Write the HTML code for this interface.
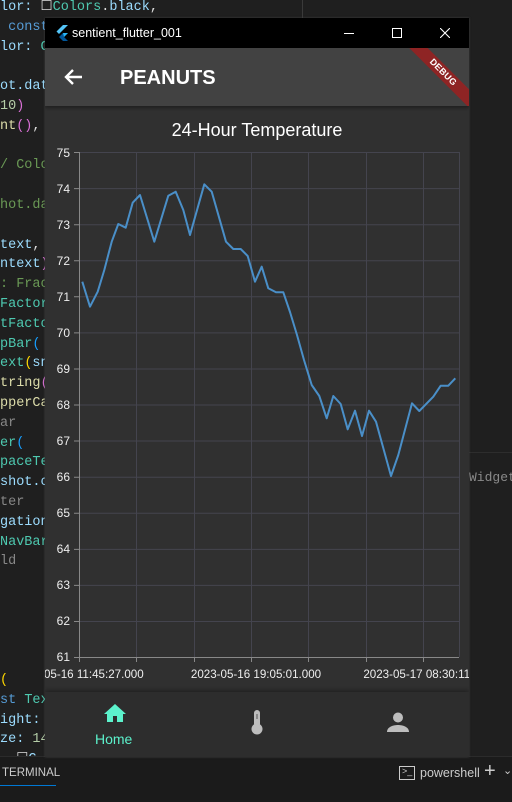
<!DOCTYPE html>
<html><head><meta charset="utf-8"><style>
*{margin:0;padding:0;box-sizing:border-box}
body{width:512px;height:802px;overflow:hidden;background:#1f1f1f;position:relative;font-family:"Liberation Sans",sans-serif}
.code{position:absolute;left:0;top:-2px;font-family:"Liberation Mono",monospace;font-size:13.5px;line-height:19.8px;color:#9cdcfe;white-space:pre}
.abs{position:absolute}
</style></head><body>
<div class="code"><span style="color:#9cdcfe">lor: </span><span style="color:#ddd">☐</span><span style="color:#4ec9b0">Colors</span><span style="color:#ddd">.</span><span style="color:#9cdcfe">black</span><span style="color:#ddd">,</span>
<span style="color:#569cd6"> const</span>
lor: <span style="color:#4ec9b0">C</span>

ot.dat
<span style="color:#b5cea8">10</span><span style="color:#da70d6">)</span>
<span style="color:#dcdcaa">nt</span><span style="color:#da70d6">()</span><span style="color:#ddd">,</span>

<span style="color:#6a9955">/ Colo</span>

<span style="color:#6a9955">hot.da</span>

text<span style="color:#ddd">,</span>
ntext<span style="color:#da70d6">)</span>
<span style="color:#6a9955">: Frac</span>
<span style="color:#4ec9b0">Factor</span>
<span style="color:#4ec9b0">tFacto</span>
<span style="color:#4ec9b0">pBar</span><span style="color:#179fff">(</span>
<span style="color:#4ec9b0">ext</span><span style="color:#ffd700">(</span>sn
<span style="color:#dcdcaa">tring</span><span style="color:#da70d6">(</span>
<span style="color:#dcdcaa">pperCa</span>
<span style="color:#888">ar</span>
<span style="color:#4ec9b0">er</span><span style="color:#179fff">(</span>
<span style="color:#4ec9b0">paceTe</span>
shot.c
<span style="color:#888">ter</span>
gation
<span style="color:#4ec9b0">NavBar</span>
<span style="color:#888">ld</span>





<span style="color:#ffd700">(</span>
<span style="color:#569cd6">st </span><span style="color:#4ec9b0">Tex</span>
ight:
ze: <span style="color:#b5cea8">14</span>
  <span style="color:#ddd">☐</span>C.</div>
<div class="abs" style="left:302px;top:0;width:1px;height:18px;background:#3a3a3a"></div>
<div class="abs" style="left:469px;top:452px;width:43px;height:1px;background:#2d2d2d"></div>
<div class="abs" style="left:469px;top:470px;font-family:'Liberation Mono',monospace;font-size:13px;color:#8a8a8a">Widget</div>

<!-- bottom panel -->
<div class="abs" style="left:0;top:756px;width:512px;height:46px;background:#1b1b1b;border-top:1px solid #2b2b2b"></div>
<div class="abs" style="left:2px;top:767px;font-size:11.5px;color:#ccc">TERMINAL</div>
<div class="abs" style="left:0;top:785px;width:56px;height:1px;background:#0078d4"></div>
<div class="abs" style="left:399px;top:766px;width:16px;height:14px;border:1px solid #ccc"></div>
<div class="abs" style="left:402px;top:766px;font-size:9px;color:#ccc">&gt;_</div>
<div class="abs" style="left:420px;top:766px;font-size:12.5px;color:#ccc">powershell</div>
<div class="abs" style="left:484px;top:760px;font-size:20px;color:#ccc">+</div>
<div class="abs" style="left:503px;top:764px;font-size:11px;color:#ccc">⌄</div>

<!-- window -->
<div class="abs" style="left:45px;top:18px;width:424px;height:739px;background:#303030;box-shadow:0 0 2px #444;overflow:hidden">
  <div class="abs" style="left:0;top:0;width:424px;height:30px;background:#000"></div>
  <svg class="abs" style="left:10px;top:7px" width="14" height="17" viewBox="0 0 14 17"><path d="M8 0h5L4 9 1.5 6.5z" fill="#54c5f8"/><path d="M8 8h5l-4 4 4 4H8L4 12z" fill="#01579b"/><path d="M8 8h5l-4 4z" fill="#29b6f6"/></svg>
  <div class="abs" style="left:27px;top:8px;font-size:12.5px;color:#fff">sentient_flutter_001</div>
  <div class="abs" style="left:299px;top:15px;width:10px;height:1px;background:#fff"></div>
  <div class="abs" style="left:347px;top:10px;width:10px;height:10px;border:1px solid #fff"></div>
  <svg class="abs" style="left:395px;top:10px" width="10" height="10" viewBox="0 0 10 10"><path d="M0 0L10 10M10 0L0 10" stroke="#fff" stroke-width="1.1"/></svg>
  <div class="abs" style="left:0;top:30px;width:424px;height:58px;background:#424242;box-shadow:0 2px 3px rgba(0,0,0,.35);overflow:hidden">
    <div class="abs" style="left:348px;top:18px;width:100px;height:13px;background:#8e2424;transform:rotate(45deg);color:#fff;font-size:9px;font-weight:bold;text-align:center;line-height:13px;letter-spacing:.3px">DEBUG</div>
  </div>
  <svg class="abs" style="left:19px;top:50px" width="20" height="18" viewBox="0 0 20 18"><path d="M18 9H3M9 2L2 9l7 7" stroke="#fff" stroke-width="2.4" fill="none"/></svg>
  <div class="abs" style="left:75px;top:49px;font-size:20px;font-weight:bold;color:#fff">PEANUTS</div>
  <div class="abs" style="left:0;top:102px;width:424px;text-align:center;font-size:18px;color:#fff">24-Hour Temperature</div>
  <!-- nav -->
  <div class="abs" style="left:0;top:674px;width:424px;height:65px;background:#2d2d2d;box-shadow:0 -2px 4px rgba(0,0,0,.3)"></div>
  <svg class="abs" style="left:58px;top:685px" width="24" height="20" viewBox="0 0 24 20"><path d="M12 1L1 11h3v8h6v-6h4v6h6v-8h3z" fill="#5cf2cc"/></svg>
  <div class="abs" style="left:50px;top:713px;font-size:14px;color:#5cf2cc">Home</div>
  <svg class="abs" style="left:205px;top:691px" width="14" height="26" viewBox="0 0 14 26"><rect x="4" y="1" width="6" height="17" rx="3" fill="#bdbdbd"/><circle cx="7" cy="20" r="5.5" fill="#bdbdbd"/><path d="M7 5v5" stroke="#555" stroke-width="1"/></svg>
  <svg class="abs" style="left:341px;top:693px" width="24" height="22" viewBox="0 0 24 22"><circle cx="12" cy="6.5" r="5" fill="#bdbdbd"/><path d="M1 21c0-5 6-7 11-7s11 2 11 7z" fill="#bdbdbd"/></svg>
</div>

<svg class="abs" style="left:0;top:0" width="512" height="802" viewBox="0 0 512 802">
<defs><clipPath id="c"><rect x="45" y="0" width="424" height="802"/></clipPath></defs>
<g clip-path="url(#c)" font-family="Liberation Sans, sans-serif">
<g stroke="#44444e" stroke-width="1">
<path d="M79 152.5H459M79 188.6H459M79 224.7H459M79 260.7H459M79 296.8H459M79 332.9H459M79 369H459M79 405H459M79 441H459M79 477.2H459M79 513.3H459M79 549.4H459M79 585.4H459M79 621.5H459"/>
<path d="M136.5 152V657M194.5 152V657M251.5 152V657M308.5 152V657M366.5 152V657M423.5 152V657M459.5 152V657"/>
</g>
<g stroke="#888" stroke-width="1">
<path d="M79.5 152V662M79 657.5H459M74 152.5H79M74 188.6H79M74 224.7H79M74 260.7H79M74 296.8H79M74 332.9H79M74 369H79M74 405H79M74 441H79M74 477.2H79M74 513.3H79M74 549.4H79M74 585.4H79M74 621.5H79M74 657.5H79M136.5 657V662M194.5 657V662M251.5 657V662M308.5 657V662M366.5 657V662M423.5 657V662"/>
</g>
<g fill="#eee" font-size="12" text-anchor="end">
<text x="70" y="157">75</text><text x="70" y="193">74</text><text x="70" y="229">73</text><text x="70" y="265">72</text><text x="70" y="301">71</text><text x="70" y="337">70</text><text x="70" y="373">69</text><text x="70" y="409">68</text><text x="70" y="445">67</text><text x="70" y="481">66</text><text x="70" y="517">65</text><text x="70" y="553">64</text><text x="70" y="589">63</text><text x="70" y="625">62</text><text x="70" y="661">61</text>
</g>
<g fill="#eee" font-size="11.6" text-anchor="middle">
<text x="79" y="678">2023-05-16 11:45:27.000</text>
<text x="256" y="678">2023-05-16 19:05:01.000</text>
<text x="428" y="678">2023-05-17 08:30:11.000</text>
</g>
<polyline fill="none" stroke="#4a8fc8" stroke-width="2" stroke-linejoin="round" points="82.3,281.7 90,306.7 97.7,291.7 104.3,270 111.7,241.7 118.3,224 125.7,227.7 132.7,202.7 140,195 154.3,241.7 168.3,195.7 175.7,191.7 183.3,210 190,235 204.3,184.3 211.7,191.7 226,241.7 233.3,249 240.7,249 247.7,256 255,281.7 261.7,266.7 268.3,288.3 276,292.3 283.3,292.3 290,312 297,335 304,360 311.7,385 319.3,396 326.7,418.3 333.3,396 340.7,404 347.7,429.3 355,410.7 362,436 369,410.7 376,421.7 391,476 398.3,455 412,403.3 419.3,411 433.3,396.7 440.7,385.7 448.3,385.7 455.3,378.3"/>
</g>
</svg>
</body></html>
